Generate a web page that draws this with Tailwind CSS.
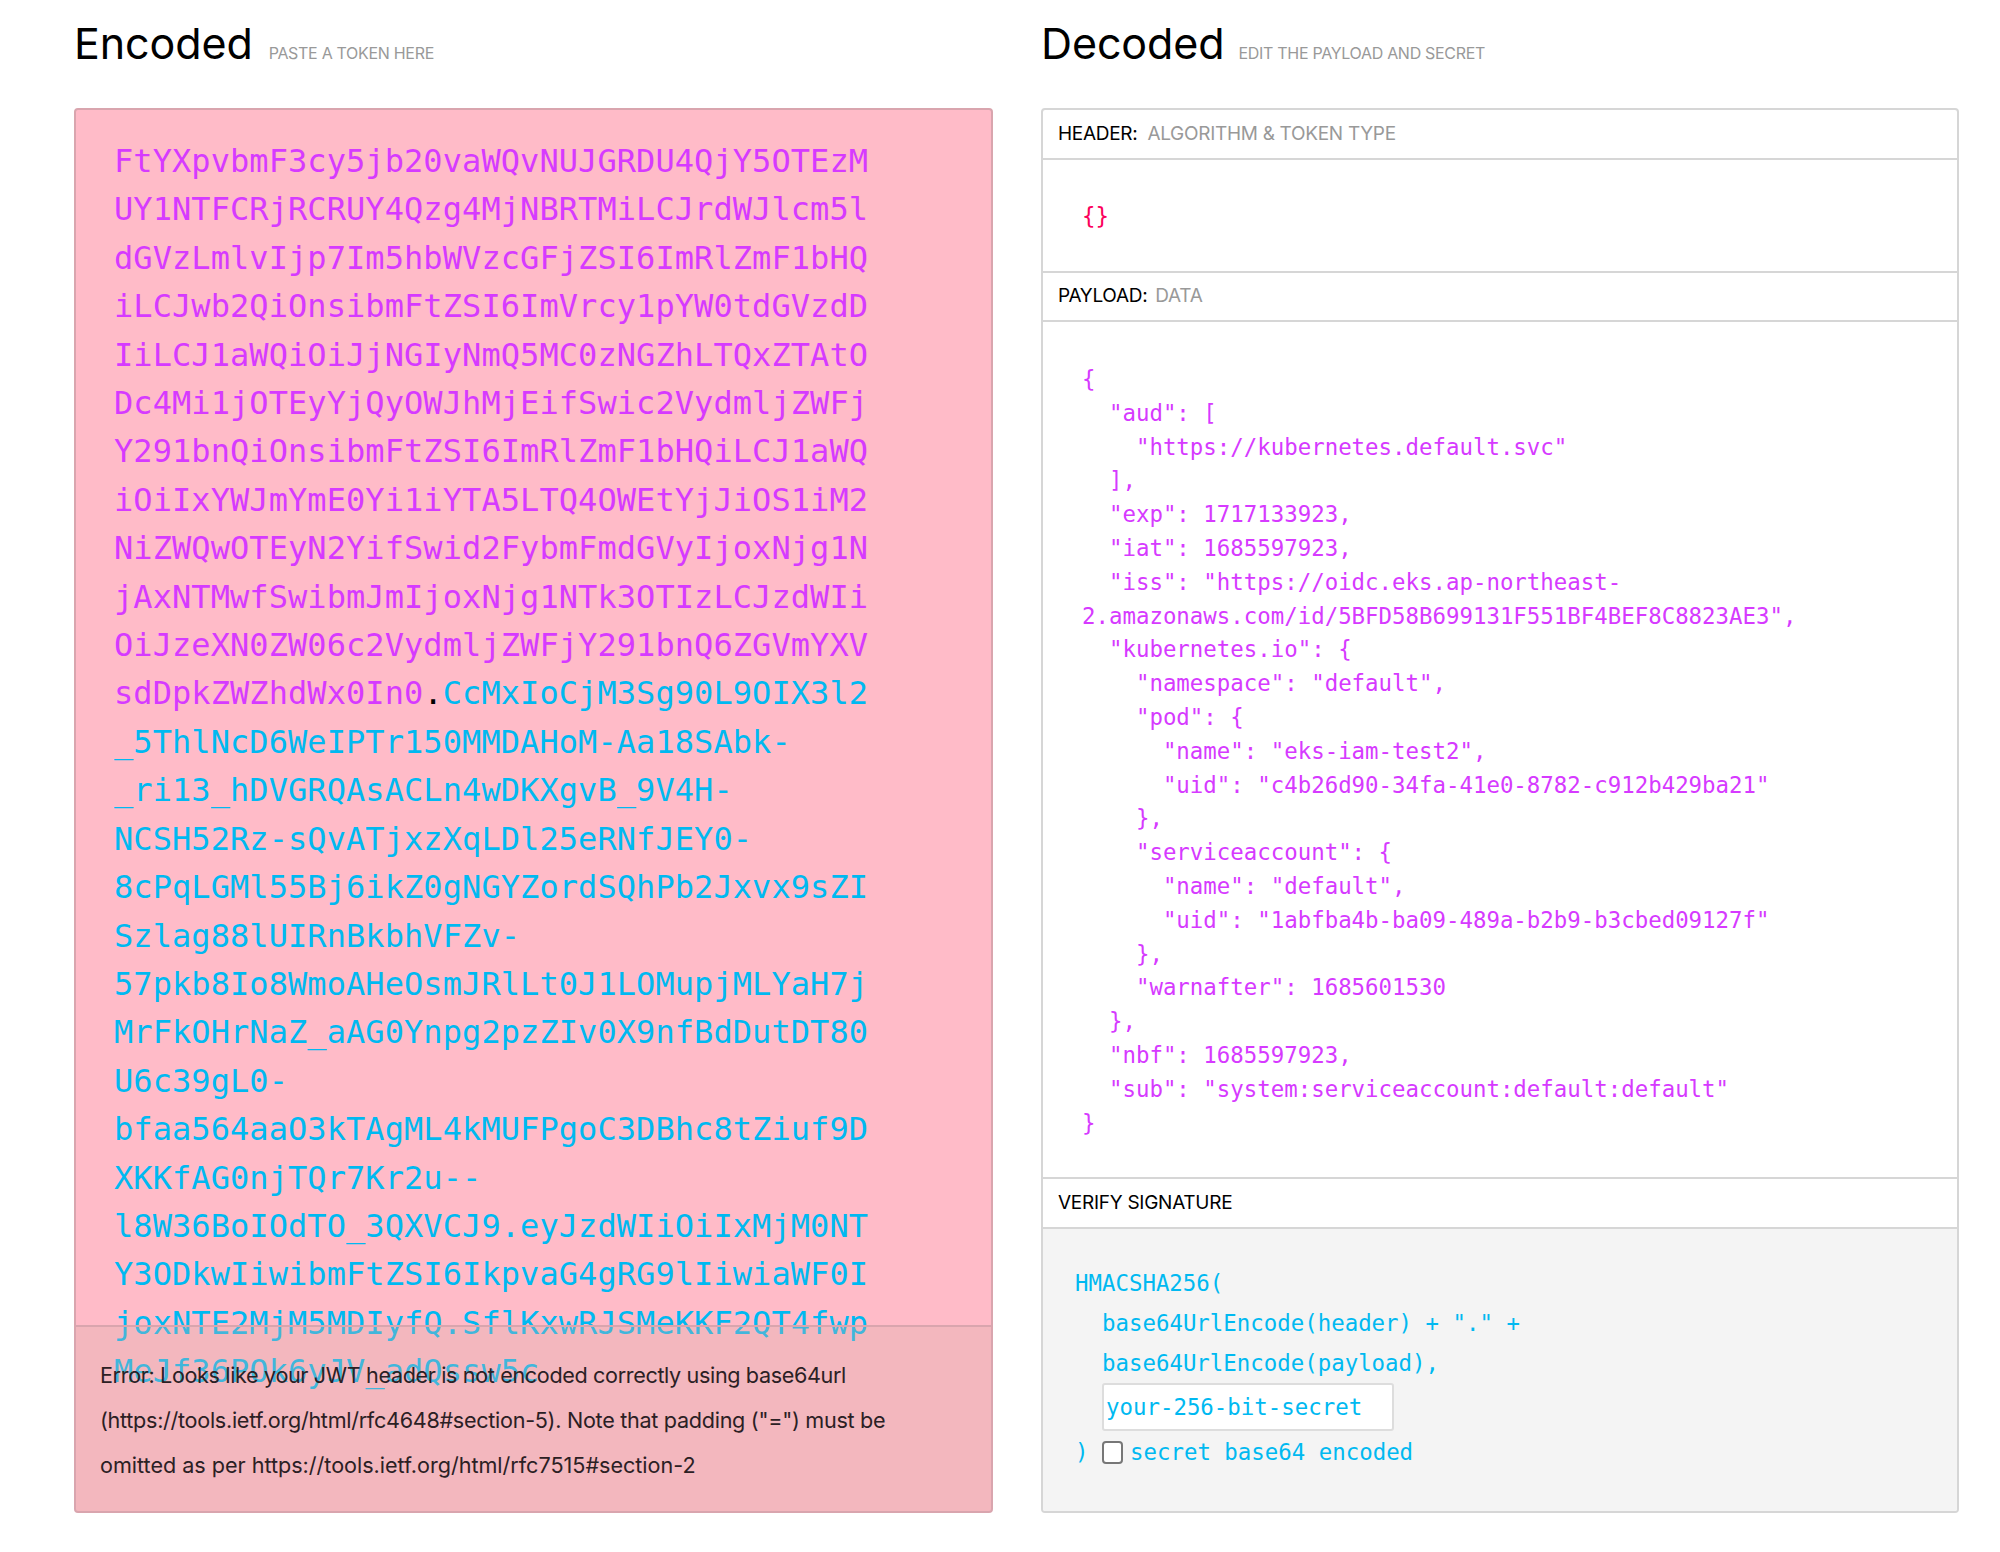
<!doctype html>
<html><head><meta charset="utf-8"><script src="https://cdn.jsdelivr.net/npm/@tailwindcss/browser@4"></script></head>
<body class="bg-white">
<div class="w-[2000px] h-[1552px] flex gap-[48px] pl-[74px] font-['Inter',sans-serif] text-black overflow-hidden">
  <section class="w-[919px] flex flex-col">
    <div class="h-[108px] flex items-baseline pt-[12px]">
      <h2 class="text-[43px] leading-[62px] font-normal tracking-[-0.1px]">Encoded</h2>
      <span class="ml-[16px] text-[16px] tracking-[-0.3px] text-[#999]">PASTE A TOKEN HERE</span>
    </div>
    <div class="relative h-[1405px] rounded-[4px] border-2 border-[#d9a5ae] bg-[#ffbbc8] overflow-hidden">
      <pre class="pl-[38px] pt-[27px] text-[32px] leading-[48.4px] tracking-[0.07px] font-['DejaVu_Sans_Mono',monospace] text-[#d63aff]">FtYXpvbmF3cy5jb20vaWQvNUJGRDU4QjY5OTEzM
UY1NTFCRjRCRUY4Qzg4MjNBRTMiLCJrdWJlcm5l
dGVzLmlvIjp7Im5hbWVzcGFjZSI6ImRlZmF1bHQ
iLCJwb2QiOnsibmFtZSI6ImVrcy1pYW0tdGVzdD
IiLCJ1aWQiOiJjNGIyNmQ5MC0zNGZhLTQxZTAtO
Dc4Mi1jOTEyYjQyOWJhMjEifSwic2VydmljZWFj
Y291bnQiOnsibmFtZSI6ImRlZmF1bHQiLCJ1aWQ
iOiIxYWJmYmE0Yi1iYTA5LTQ4OWEtYjJiOS1iM2
NiZWQwOTEyN2YifSwid2FybmFmdGVyIjoxNjg1N
jAxNTMwfSwibmJmIjoxNjg1NTk3OTIzLCJzdWIi
OiJzeXN0ZW06c2VydmljZWFjY291bnQ6ZGVmYXV
sdDpkZWZhdWx0In0<span class="text-black">.</span><span class="text-[#00b9f1]">CcMxIoCjM3Sg90L9OIX3l2
_5ThlNcD6WeIPTr150MMDAHoM-Aa18SAbk-
_ri13_hDVGRQAsACLn4wDKXgvB_9V4H-
NCSH52Rz-sQvATjxzXqLDl25eRNfJEY0-
8cPqLGMl55Bj6ikZ0gNGYZordSQhPb2Jxvx9sZI
Szlag88lUIRnBkbhVFZv-
57pkb8Io8WmoAHeOsmJRlLt0J1LOMupjMLYaH7j
MrFkOHrNaZ_aAG0Ynpg2pzZIv0X9nfBdDutDT80
U6c39gL0-
bfaa564aaO3kTAgML4kMUFPgoC3DBhc8tZiuf9D
XKKfAG0njTQr7Kr2u--
l8W36BoIOdTO_3QXVCJ9.eyJzdWIiOiIxMjM0NT
Y3ODkwIiwibmFtZSI6IkpvaG4gRG9lIiwiaWF0I
joxNTE2MjM5MDIyfQ.SflKxwRJSMeKKF2QT4fwp
MeJf36POk6yJV_adQssw5c</span></pre>
      <div class="absolute left-0 right-0 bottom-0 h-[186px] border-t-2 border-[#d9a5ae] bg-[#d7b1aa]/30 pl-[24px] pt-[26px] text-[21.6px] leading-[45px] text-[#2b2024]">
        <p class="tracking-[-0.36px]">Error: Looks like your JWT header is not encoded correctly using base64url</p>
        <p class="tracking-[-0.29px]">(https://tools.ietf.org/html/rfc4648#section-5). Note that padding ("=") must be</p>
        <p class="tracking-[-0.02px]">omitted as per https://tools.ietf.org/html/rfc7515#section-2</p>
      </div>
    </div>
  </section>
  <section class="w-[918px] flex flex-col">
    <div class="h-[108px] flex items-baseline pt-[12px]">
      <h2 class="text-[43px] leading-[62px] font-normal tracking-[-0.1px]">Decoded</h2>
      <span class="ml-[14px] text-[16px] tracking-[-0.3px] text-[#999]">EDIT THE PAYLOAD AND SECRET</span>
    </div>
    <div class="h-[1405px] rounded-[4px] border-2 border-[#d6d6d6] flex flex-col overflow-hidden font-['DejaVu_Sans_Mono',monospace]">
      <div class="h-[50px] shrink-0 flex items-center pl-[15px] border-b-2 border-[#d6d6d6] font-['Inter',sans-serif] text-[19px] tracking-[-0.3px]"><span>HEADER:</span><span class="ml-[10px] text-[#999]">ALGORITHM &amp; TOKEN TYPE</span></div>
      <div class="h-[111px] shrink-0 flex items-center pl-[39px] pt-[2px] text-[22.4px] text-[#fb015b]">{}</div>
      <div class="h-[51px] shrink-0 flex items-center pl-[15px] border-y-2 border-[#d6d6d6] font-['Inter',sans-serif] text-[19px] tracking-[-0.3px]"><span>PAYLOAD:</span><span class="ml-[8px] text-[#999]">DATA</span></div>
      <pre class="h-[855px] shrink-0 pl-[39px] pt-[41px] text-[22.4px] leading-[33.8px] text-[#d63aff] font-['DejaVu_Sans_Mono',monospace]">{
  "aud": [
    "https://kubernetes.default.svc"
  ],
  "exp": 1717133923,
  "iat": 1685597923,
  "iss": "https://oidc.eks.ap-northeast-
2.amazonaws.com/id/5BFD58B699131F551BF4BEF8C8823AE3",
  "kubernetes.io": {
    "namespace": "default",
    "pod": {
      "name": "eks-iam-test2",
      "uid": "c4b26d90-34fa-41e0-8782-c912b429ba21"
    },
    "serviceaccount": {
      "name": "default",
      "uid": "1abfba4b-ba09-489a-b2b9-b3cbed09127f"
    },
    "warnafter": 1685601530
  },
  "nbf": 1685597923,
  "sub": "system:serviceaccount:default:default"
}</pre>
      <div class="h-[52px] shrink-0 flex items-center pl-[15px] border-y-2 border-[#d6d6d6] font-['Inter',sans-serif] text-[19px] tracking-[-0.27px]">VERIFY SIGNATURE</div>
      <div class="flex-1 bg-[#f4f4f4] pl-[32px] pt-[34px] text-[22.4px] text-[#00b9f1]">
        <div class="h-[40px] leading-[40px]">HMACSHA256(</div>
        <div class="h-[40px] leading-[40px] pl-[27px]">base64UrlEncode(header) + "." +</div>
        <div class="h-[40px] leading-[40px] pl-[27px]">base64UrlEncode(payload),</div>
        <div class="pl-[27px] h-[49px]"><div class="w-[292px] h-[48px] rounded-[3px] border-2 border-[#ddd] bg-white pl-[2px] leading-[44px]">your-256-bit-secret</div></div>
        <div class="flex items-center h-[40px] mt-[1px]"><span class="w-[27px]">)</span><span class="w-[21px] h-[23px] mb-[2px] rounded-[4px] border-2 border-[#777] bg-white"></span><span class="ml-[7px]">secret base64 encoded</span></div>
      </div>
    </div>
  </section>
</div>
</body></html>
